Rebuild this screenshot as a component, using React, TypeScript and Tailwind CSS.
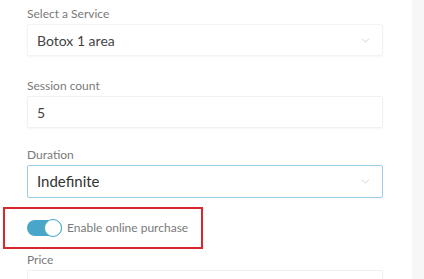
import { ChevronDown } from "lucide-react";

function Label({ children }: { children: React.ReactNode }) {
  return <div className="text-[12px] leading-none text-[#7a7a7a] mb-[4px]">{children}</div>;
}

export default function App() {
  return (
    <div className="w-[424px] h-[279px] overflow-hidden bg-white flex font-['Lato',sans-serif]">
      <div className="flex-1 pl-[27px] pr-[29px] pt-[8px]">
        <Label>Select a Service</Label>
        <div className="h-[32px] flex items-center justify-between pl-[9px] pr-[10px] border border-[#f3f3f3] rounded-[2px] shadow-[0_1px_2px_rgba(0,0,0,0.04)]">
          <span className="text-[14px] text-[#444]">Botox 1 area</span>
          <ChevronDown className="w-[13px] h-[13px] text-[#c8c8c8]" strokeWidth={1.5} />
        </div>

        <div className="mt-[24px]">
          <Label>Session count</Label>
          <div className="h-[32px] flex items-center pl-[9px] border border-[#f1f1f1] rounded-[2px] shadow-[0_1px_2px_rgba(0,0,0,0.04)]">
            <span className="text-[14px] text-[#444]">5</span>
          </div>
        </div>

        <div className="mt-[21px]">
          <Label>Duration</Label>
          <div className="h-[33px] flex items-center justify-between pl-[9px] pr-[10px] border border-[#9ccbe6] rounded-[2px]">
            <span className="text-[15px] text-[#333]">Indefinite</span>
            <ChevronDown className="w-[13px] h-[13px] text-[#c8c8c8]" strokeWidth={1.5} />
          </div>
        </div>

        <div className="-ml-[24px] mt-[9px] w-[200px] h-[42px] border-2 border-[#d9262b] flex items-center pl-[22px] gap-[5px]">
          <div className="w-[35px] h-[16px] rounded-full bg-[#4aa6c8] relative">
            <div className="absolute right-0 top-[-1px] w-[18px] h-[18px] rounded-full bg-white border border-[#4aa6c8]" />
          </div>
          <span className="text-[12px] text-[#7a7a7a]">Enable online purchase</span>
        </div>

        <div className="mt-[5px]">
          <Label>Price</Label>
          <div className="h-[32px] border border-[#f1f1f1] rounded-[2px]" />
        </div>
      </div>
      <div className="w-[12px] bg-[#f7f7f8]" />
    </div>
  );
}
